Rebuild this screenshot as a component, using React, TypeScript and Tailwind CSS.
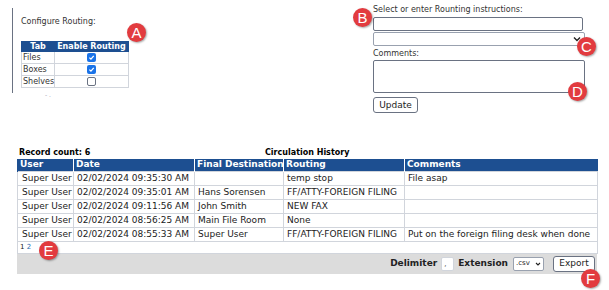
import React from 'react';

const rows = [
  { user: 'Super User', date: '02/02/2024 09:35:30 AM', dest: '', routing: 'temp stop', comments: 'File asap' },
  { user: 'Super User', date: '02/02/2024 09:35:01 AM', dest: 'Hans Sorensen', routing: 'FF/ATTY-FOREIGN FILING', comments: '' },
  { user: 'Super User', date: '02/02/2024 09:11:56 AM', dest: 'John Smith', routing: 'NEW FAX', comments: '' },
  { user: 'Super User', date: '02/02/2024 08:56:25 AM', dest: 'Main File Room', routing: 'None', comments: '' },
  { user: 'Super User', date: '02/02/2024 08:55:33 AM', dest: 'Super User', routing: 'FF/ATTY-FOREIGN FILING', comments: 'Put on the foreign filing desk when done' },
];

function Badge({ letter, className }: { letter: string; className: string }) {
  return (
    <div
      className={`absolute w-[19px] h-[19px] rounded-full bg-[#e23b3f] text-white flex items-center justify-center text-[15px] leading-none shadow-[1px_1px_2px_rgba(0,0,0,0.35)] ${className}`}
      style={{ fontFamily: '"Liberation Sans", Arial, sans-serif' }}
    >
      {letter}
    </div>
  );
}

function Check({ on }: { on: boolean }) {
  if (!on) {
    return <span className="inline-block w-[9px] h-[9px] rounded-[2px] border border-gray-500 bg-white align-middle" />;
  }
  return (
    <span className="inline-flex w-[9px] h-[9px] rounded-[2px] bg-[#1a73e8] items-center justify-center align-middle">
      <svg width="7" height="7" viewBox="0 0 10 10">
        <path d="M2 5.2 L4.2 7.4 L8.2 2.6" stroke="white" strokeWidth="1.8" fill="none" />
      </svg>
    </span>
  );
}

export default function App() {
  return (
    <div
      className="relative w-[609px] h-[290px] bg-white text-[#222] overflow-hidden"
      style={{ fontFamily: '"DejaVu Sans", Verdana, sans-serif' }}
    >
      {/* top section */}
      <div className="flex h-[147px]">
        <div className="ml-[12px] mt-[8px] h-[85px] w-[122px] shrink-0 border-l border-gray-500 pl-[8px] pt-[8px]">
          <div className="text-[8px] text-[#333] whitespace-nowrap">Configure Routing:</div>
          <table className="mt-[13px] border-collapse text-[8px] text-[#333] whitespace-nowrap">
            <thead>
              <tr className="bg-[#1d4f91] text-white h-[9px] leading-[9px]">
                <th className="w-[32px] font-bold px-0 border border-[#1d4f91]">Tab</th>
                <th className="w-[73px] font-bold px-[2px] border border-[#1d4f91]">Enable Routing</th>
              </tr>
            </thead>
            <tbody>
              {[['Files', true], ['Boxes', true], ['Shelves', false]].map(([n, on]) => (
                <tr key={n as string} className="h-[12px]">
                  <td className="border border-gray-300 pl-[1px] leading-[11px]">{n as string}</td>
                  <td className="border border-gray-300 text-center leading-[10px]">
                    <Check on={on as boolean} />
                  </td>
                </tr>
              ))}
            </tbody>
          </table>
          <div className="mt-[4px] ml-[24px] text-[6px] text-gray-400 leading-none">- .</div>
        </div>

        <div className="ml-[239px] pt-[4px] w-[213px] shrink-0 text-[8px] text-[#333]">
          <div className="leading-[11px] whitespace-nowrap">Select or enter Rounting instructions:</div>
          <div className="mt-[2px] h-[14px] w-[210px] border border-gray-500 rounded-[2px] bg-white" />
          <div className="mt-[1px] h-[14px] w-[212px] border border-gray-400 rounded-[2px] bg-white flex items-center justify-end pr-[3px]">
            <svg width="8" height="6" viewBox="0 0 8 6">
              <path d="M1 1.5 L4 4.5 L7 1.5" stroke="#222" strokeWidth="1.4" fill="none" />
            </svg>
          </div>
          <div className="mt-[2px] leading-[11px]">Comments:</div>
          <div className="mt-[1px] h-[33px] w-[212px] border border-gray-500 rounded-[2px] bg-white" />
          <button className="mt-[4px] h-[16px] w-[45px] border border-gray-500 rounded-[3px] bg-white text-[9px] text-[#222] leading-none">
            Update
          </button>
        </div>
      </div>

      {/* circulation history */}
      <div className="ml-[17px] w-[580px] text-[9px]">
        <div className="flex h-[12px] leading-[12px] font-bold text-[8px] text-black">
          <div className="w-[248px] pl-[2px]">Record count: 6</div>
          <div>Circulation History</div>
        </div>
        <table className="border-collapse table-fixed w-[580px]">
          <colgroup>
            <col className="w-[56px]" />
            <col className="w-[121px]" />
            <col className="w-[89px]" />
            <col className="w-[121px]" />
            <col className="w-[193px]" />
          </colgroup>
          <thead>
            <tr className="bg-[#1d4f91] text-white h-[12px]">
              {['User', 'Date', 'Final Destination', 'Routing', 'Comments'].map((h) => (
                <th key={h} className="text-left font-bold pl-[2px] leading-[11px] border-l border-white first:border-l-[#1d4f91] whitespace-nowrap overflow-hidden">
                  {h}
                </th>
              ))}
            </tr>
          </thead>
          <tbody>
            {rows.map((r, i) => (
              <tr key={i} className="h-[14px]">
                <td className="border border-gray-300 pl-[4px] leading-[13px] whitespace-nowrap overflow-hidden">{r.user}</td>
                <td className="border border-gray-300 pl-[3px] leading-[13px] whitespace-nowrap overflow-hidden">{r.date}</td>
                <td className="border border-gray-300 pl-[3px] leading-[13px] whitespace-nowrap overflow-hidden">{r.dest}</td>
                <td className="border border-gray-300 pl-[3px] leading-[13px] whitespace-nowrap overflow-hidden">{r.routing}</td>
                <td className="border border-gray-300 pl-[3px] leading-[13px] whitespace-nowrap overflow-hidden">{r.comments}</td>
              </tr>
            ))}
            <tr className="h-[12px]">
              <td colSpan={5} className="border border-gray-300 pl-[2px] text-[7px] leading-[11px]">
                <span>1</span> <span className="text-[#2b6cb0]">2</span>
              </td>
            </tr>
          </tbody>
        </table>
        <div className="h-[20px] bg-[#dcdcdc] flex items-center justify-end pr-[2px] gap-[4px] text-[9px] font-bold text-[#222]">
          <span>Delimiter</span>
          <span className="w-[13px] h-[14px] bg-white border border-gray-300 rounded-[2px] text-[7px] font-normal leading-[12px] pl-[2px]">,</span>
          <span>Extension</span>
          <span className="ml-[1px] w-[31px] h-[14px] bg-white border border-gray-400 rounded-[2px] flex items-center justify-between px-[2px] text-[7px] font-normal">
            .csv
            <svg width="6" height="4" viewBox="0 0 8 6">
              <path d="M1 1.5 L4 4.5 L7 1.5" stroke="#222" strokeWidth="1.6" fill="none" />
            </svg>
          </span>
          <button className="ml-[5px] h-[16px] w-[42px] border border-gray-500 rounded-[3px] bg-white text-[9px] font-normal leading-none">
            Export
          </button>
        </div>
      </div>

      <Badge letter="A" className="left-[127px] top-[23px]" />
      <Badge letter="B" className="left-[353px] top-[8px]" />
      <Badge letter="C" className="left-[577px] top-[37px]" />
      <Badge letter="D" className="left-[568px] top-[82px]" />
      <Badge letter="E" className="left-[39px] top-[241px]" />
      <Badge letter="F" className="left-[581px] top-[269px]" />
    </div>
  );
}
